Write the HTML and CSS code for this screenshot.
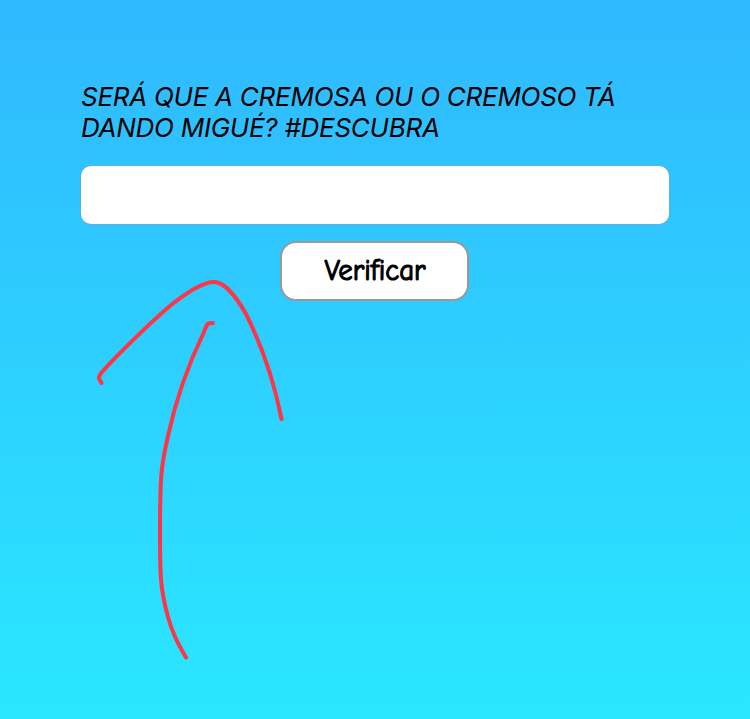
FILE: index.html
```html
<!DOCTYPE html>
<html lang="pt-BR">
<head>
<meta charset="utf-8">
<title>Verificar</title>
<link rel="stylesheet" href="styles.css">
</head>
<body>
<form class="panel">
<label class="prompt" for="name">SERÁ QUE A CREMOSA OU O CREMOSO TÁ<br>DANDO MIGUÉ? #DESCUBRA</label>
<input class="field" id="name" type="text">
<button class="verify" type="button"><span class="verify-label">Verificar</span></button>
</form>
<svg class="drawing" viewBox="0 0 750 719" aria-hidden="true">
<path d="M101.500 383C98 378 98 377 102 372C118 354 151 322 171 305C190 290 204 282 214 282C224 282 236 296 246 314C263 348 275 386 281.500 419"/>
<path d="M213 323C207 323 207.500 323 204 332C188 365 176 399 168 436C161 466 160 478 160 530C160 575 160 588 168 617C172 632 179 646 186 657.500"/>
</svg>
</body>
</html>
```
FILE: styles.css
```css
* { box-sizing: border-box; }
body {
  margin: 0;
  height: 719px;
  overflow: hidden;
  position: relative;
  background: linear-gradient(#30b8ff, #2ae7ff);
}
.panel {
  display: flex;
  flex-direction: column;
  align-items: center;
  padding: 81px 81px 0;
}
.prompt {
  width: 100%;
  font: italic 400 26px/31px Inter, sans-serif;
  letter-spacing: -0.26px;
  white-space: nowrap;
  color: #000;
}
.field {
  width: 588px;
  height: 58px;
  margin-top: 23px;
  padding: 0 16px;
  border: 0;
  border-radius: 10px;
  background: #fff;
  box-shadow: 0 0 0 0.5px #8f9da3;
  font: 26px Inter, sans-serif;
}
.verify {
  width: 189px;
  height: 60px;
  margin: 17px 1px 0 0;
  padding: 0;
  border: 2px solid #999;
  border-radius: 16px;
  background: #fff;
  color: #000;
  font: 400 28px/34px "Comic Neue", "Chalkboard SE", "Comic Sans MS", Lato, sans-serif;
}
.verify-label {
  display: inline-block;
  transform: translate(1px, -1px) scale(1.03, 1.1);
  -webkit-text-stroke: 1.1px #000;
}
.drawing {
  position: absolute;
  inset: 0;
  width: 750px;
  height: 719px;
  pointer-events: none;
  fill: none;
  stroke: #fc3549;
  stroke-width: 4;
  stroke-linecap: round;
  stroke-linejoin: round;
}
```
